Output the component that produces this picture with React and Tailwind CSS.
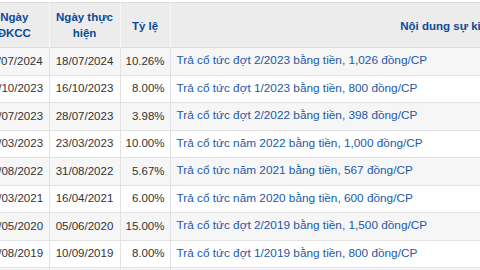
import React from "react";

const rows = [
  ["11/07/2024", "18/07/2024", "10.26%", "Trả cổ tức đợt 2/2023 bằng tiền, 1,026 đồng/CP"],
  ["05/10/2023", "16/10/2023", "8.00%", "Trả cổ tức đợt 1/2023 bằng tiền, 800 đồng/CP"],
  ["14/07/2023", "28/07/2023", "3.98%", "Trả cổ tức đợt 2/2022 bằng tiền, 398 đồng/CP"],
  ["10/03/2023", "23/03/2023", "10.00%", "Trả cổ tức năm 2022 bằng tiền, 1,000 đồng/CP"],
  ["17/08/2022", "31/08/2022", "5.67%", "Trả cổ tức năm 2021 bằng tiền, 567 đồng/CP"],
  ["31/03/2021", "16/04/2021", "6.00%", "Trả cổ tức năm 2020 bằng tiền, 600 đồng/CP"],
  ["21/05/2020", "05/06/2020", "15.00%", "Trả cổ tức đợt 2/2019 bằng tiền, 1,500 đồng/CP"],
  ["22/08/2019", "10/09/2019", "8.00%", "Trả cổ tức đợt 1/2019 bằng tiền, 800 đồng/CP"],
  ["20/03/2019", "04/04/2019", "7.00%", "Trả cổ tức năm 2018 bằng tiền, 700 đồng/CP"],
];

const App = () => {
  return (
    <div className="w-[480px] h-[270px] overflow-hidden bg-white pt-[2px] font-['Liberation_Sans',Arial,sans-serif] text-[11.5px]">
      <table className="-ml-[20px] w-[744px] table-fixed border-collapse">
        <colgroup>
          <col className="w-[69px]" />
          <col className="w-[71px]" />
          <col className="w-[50px]" />
          <col className="w-[554px]" />
        </colgroup>
        <thead>
          <tr className="h-[45px] bg-[#ececec] border-t border-b border-[#dcdcdc] text-[#0b4a96] font-bold leading-[16px]">
            <th className="border-r border-[#f6f6f6] text-center font-bold">Ngày<br />ĐKCC</th>
            <th className="border-r border-[#f6f6f6] text-center font-bold">Ngày thực<br />hiện</th>
            <th className="border-r border-[#f6f6f6] text-center font-bold pt-[2px]">Tỷ lệ</th>
            <th className="text-center font-bold pt-[2px]">Nội dung sự kiện</th>
          </tr>
        </thead>
        <tbody>
          {rows.map((r, i) => (
            <tr key={i} className={"h-[27.5px] border-b border-[#e2e2e2] " + (i % 2 === 0 ? "bg-[#f6f6f6]" : "bg-white")}>
              <td className="border-r border-[#e2e2e2] text-center text-[#333]">{r[0]}</td>
              <td className="border-r border-[#e2e2e2] text-center text-[#333]">{r[1]}</td>
              <td className="border-r border-[#e2e2e2] text-right pr-[5px] text-[#333]">{r[2]}</td>
              <td className="pl-[6px] text-left text-[11.8px] text-[#2159a8] whitespace-nowrap">{r[3]}</td>
            </tr>
          ))}
        </tbody>
      </table>
    </div>
  );
};

export default App;
